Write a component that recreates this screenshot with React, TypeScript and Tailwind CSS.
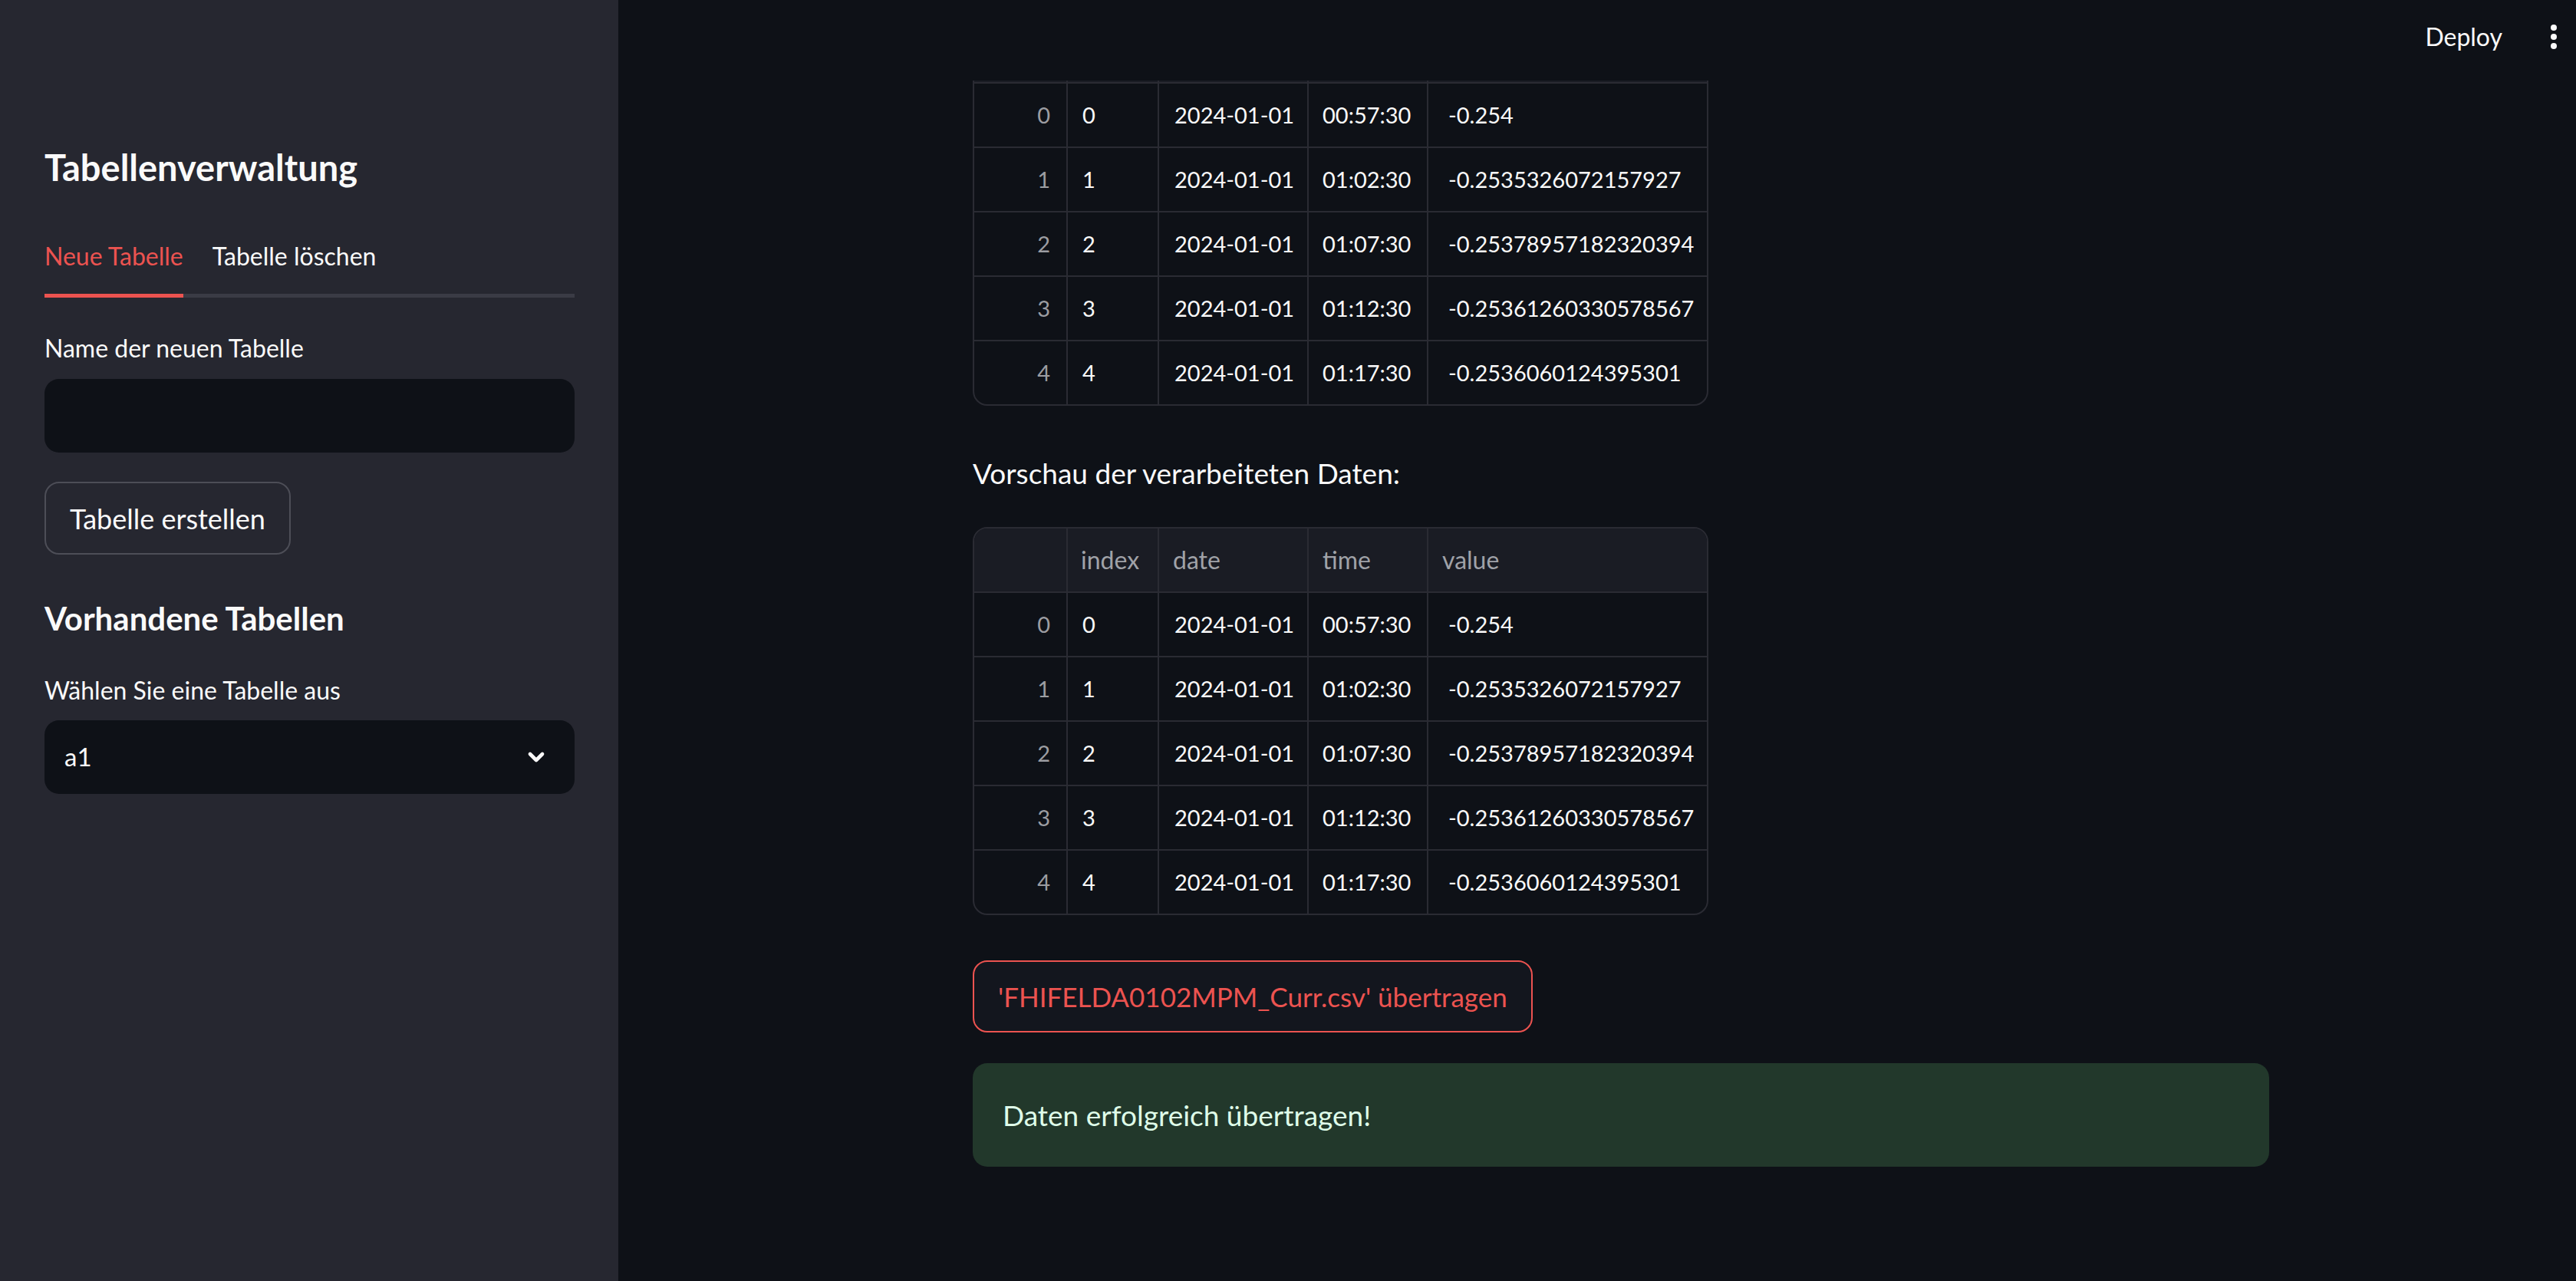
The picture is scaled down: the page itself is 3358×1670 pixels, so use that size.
import { ChevronDown } from "lucide-react";

type Row = [string, string, string, string, string];

const ROWS: Row[] = [
  ["0", "0", "2024-01-01", "00:57:30", "-0.254"],
  ["1", "1", "2024-01-01", "01:02:30", "-0.2535326072157927"],
  ["2", "2", "2024-01-01", "01:07:30", "-0.25378957182320394"],
  ["3", "3", "2024-01-01", "01:12:30", "-0.25361260330578567"],
  ["4", "4", "2024-01-01", "01:17:30", "-0.2536060124395301"],
];

function DataTable() {
  return (
    <div className="w-[959px] overflow-hidden rounded-[19px] border-2 border-[#2a2b33]">
      {/* ── Header ─────────────────────────────────────── */}
      <div className="flex h-[84px] border-b-2 border-[#2a2b33] bg-[#1a1c24] text-[32px] text-[#a0a2a8]">
        <div className="w-[122px] border-r-2 border-[#2a2b33]" />
        <div className="flex w-[119px] items-center border-r-2 border-[#2a2b33] pl-[17px]">index</div>
        <div className="flex w-[195px] items-center border-r-2 border-[#2a2b33] pl-[18px]">date</div>
        <div className="flex w-[156px] items-center border-r-2 border-[#2a2b33] pl-[18px]">time</div>
        <div className="flex flex-1 items-center pl-[18px]">value</div>
      </div>

      {/* ── Rows ───────────────────────────────────────── */}
      {ROWS.map((r, i) => (
        <div
          key={r[0]}
          className={
            i < ROWS.length - 1
              ? "flex h-[84px] border-b-2 border-[#2a2b33] text-[29px]"
              : "flex h-[82px] text-[29px]"
          }
        >
          <div className="flex w-[122px] items-center justify-end border-r-2 border-[#2a2b33] pr-[21px] text-[#9c9da2]">
            {r[0]}
          </div>
          <div className="flex w-[119px] items-center border-r-2 border-[#2a2b33] pl-[19px]">{r[1]}</div>
          <div className="flex w-[195px] items-center border-r-2 border-[#2a2b33] pl-[20px]">{r[2]}</div>
          <div className="flex w-[156px] items-center border-r-2 border-[#2a2b33] pl-[18px]">{r[3]}</div>
          <div className="flex flex-1 items-center pl-[26px]">{r[4]}</div>
        </div>
      ))}
    </div>
  );
}

function Sidebar() {
  return (
    <aside className="w-[806px] shrink-0 bg-[#262730] pl-[58px] pr-[57px] pt-[189px]">
      <h2 className="text-[47px] font-bold leading-[58px]">Tabellenverwaltung</h2>

      {/* Tabs */}
      <div className="mt-[67px] flex gap-[38px] border-b-[5px] border-[#3a3b45]">
        <button className="-mb-[5px] border-b-[5px] border-[#ec5350] pb-[29px] text-[32px] leading-[40px] text-[#ec5350]">
          Neue Tabelle
        </button>
        <button className="pb-[29px] text-[32px] leading-[40px] text-[#fafafa]">
          Tabelle löschen
        </button>
      </div>

      <p className="mt-[46px] text-[32px] leading-[40px]">Name der neuen Tabelle</p>
      <input
        type="text"
        className="mt-[20px] block h-[96px] w-full rounded-[19px] bg-[#0e1117] px-[26px] text-[32px] outline-none"
      />

      <button className="mt-[38px] h-[95px] rounded-[19px] border-2 border-[#4d4e57] px-[31px] text-[36px]">
        Tabelle erstellen
      </button>

      <h3 className="mt-[57px] text-[42px] font-bold leading-[52px]">Vorhandene Tabellen</h3>

      <p className="mt-[48px] text-[32px] leading-[40px]">Wählen Sie eine Tabelle aus</p>
      <div className="mt-[19px] flex h-[96px] items-center justify-between rounded-[19px] bg-[#0e1117] pl-[26px] pr-[34px]">
        <span className="text-[33px]">a1</span>
        <ChevronDown size={32} strokeWidth={3.5} className="text-[#fafafa]" />
      </div>
    </aside>
  );
}

export default function App() {
  return (
    <div className="flex min-h-screen w-full font-['Lato',sans-serif] text-[#fafafa]">
      <Sidebar />

      <main className="relative flex-1 bg-[#0e1117]">
        <div className="w-[2152px] pl-[462px] pt-[23px]">
          <DataTable />

          <p className="mt-[57px] text-[37px] leading-[61px]">Vorschau der verarbeiteten Daten:</p>

          <div className="mt-[40px]">
            <DataTable />
          </div>

          <button className="mt-[59px] flex h-[94px] items-center rounded-[19px] border-2 border-[#ec5350] bg-[#13161e] px-[31px] text-[35px] text-[#ec5350]">
            'FHIFELDA0102MPM_Curr.csv' übertragen
          </button>

          <div className="mt-[40px] flex h-[135px] w-[1690px] items-center rounded-[19px] bg-[#22382b] px-[39px] text-[37px] text-[#dffde9]">
            Daten erfolgreich übertragen!
          </div>
        </div>

        {/* ── Top bar (covers scrolled content) ─────────────── */}
        <header className="absolute inset-x-0 top-0 z-10 flex h-[105px] items-start justify-end gap-[63px] bg-[#0e1117] pr-[25px] pt-[28px]">
          <span className="text-[32px] leading-[40px]">Deploy</span>
          <div className="flex h-[40px] flex-col items-center justify-center gap-[4px]">
            <span className="h-[8px] w-[8px] rounded-full bg-[#fafafa]" />
            <span className="h-[8px] w-[8px] rounded-full bg-[#fafafa]" />
            <span className="h-[8px] w-[8px] rounded-full bg-[#fafafa]" />
          </div>
        </header>
      </main>
    </div>
  );
}
